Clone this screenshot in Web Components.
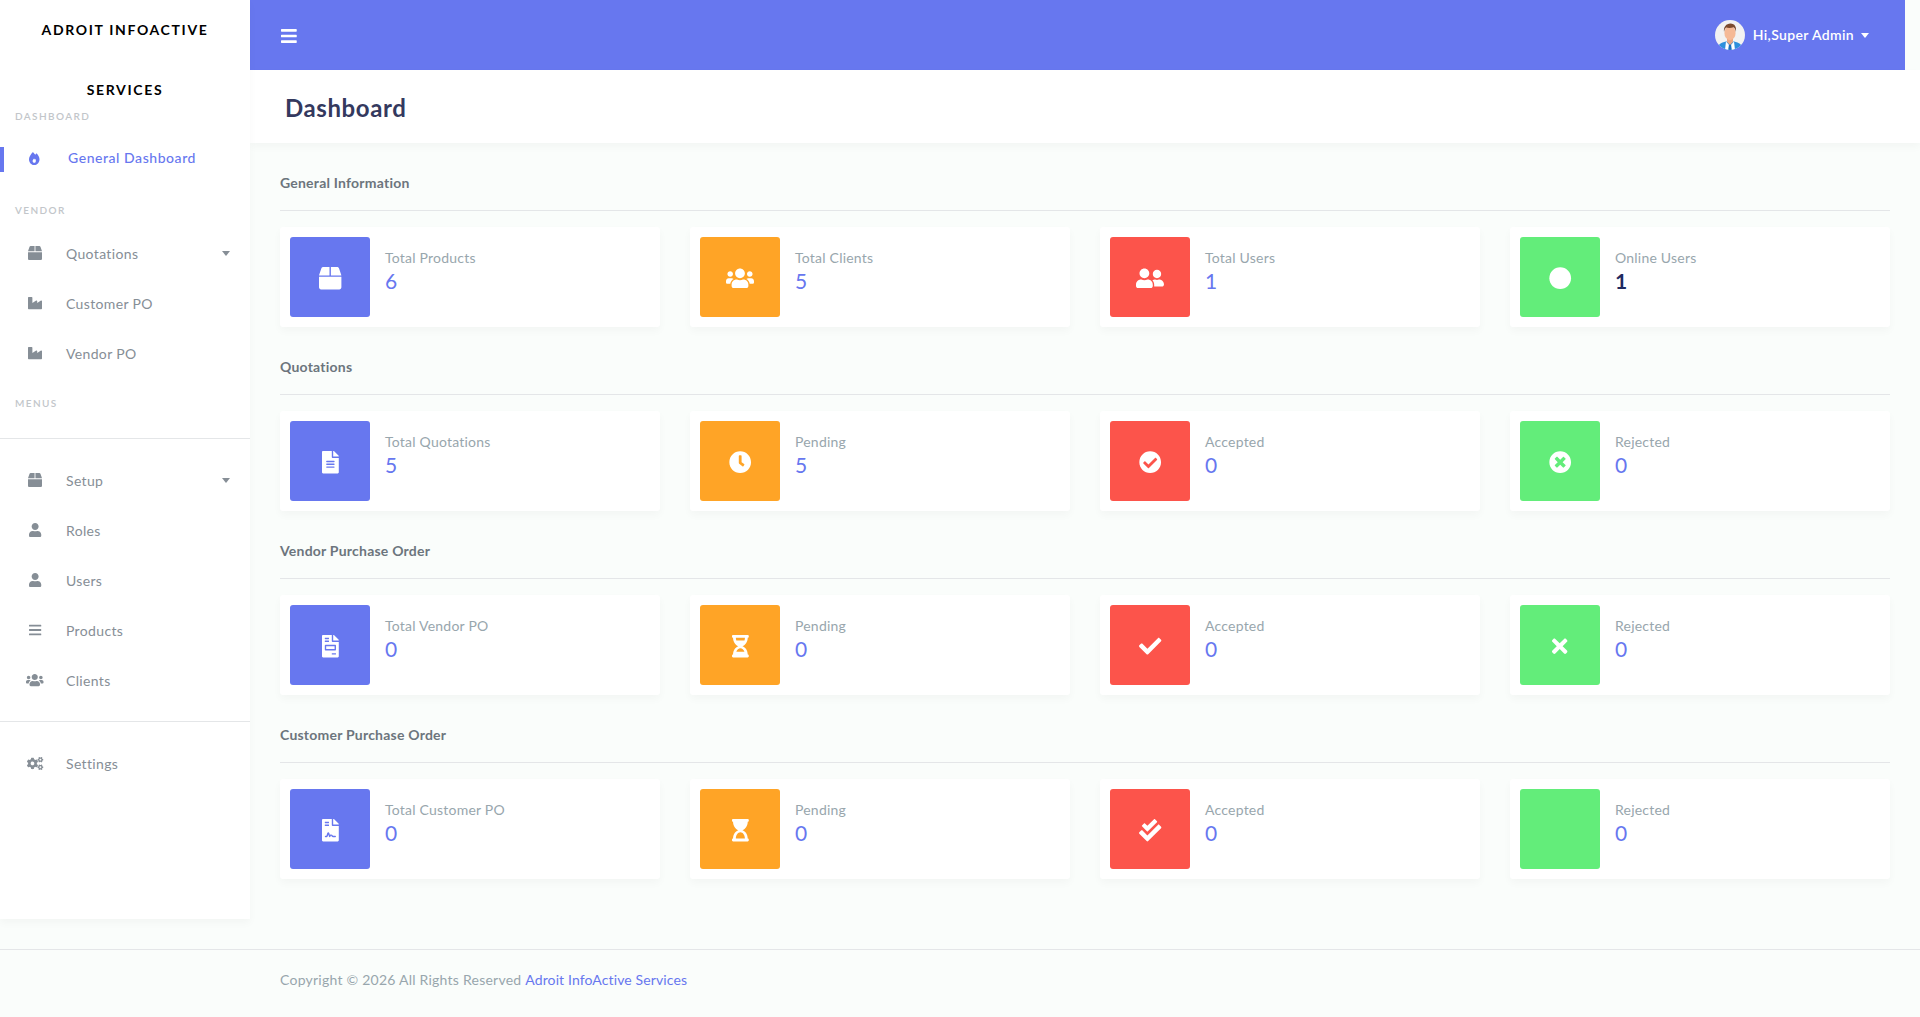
<!DOCTYPE html>
<html lang="en">
<head>
<meta charset="utf-8">
<title>Dashboard</title>
<style>
  html, body { margin: 0; padding: 0; background: #fafdfb; }
  body { font-family: "Lato", "Noto Sans", sans-serif; font-size: 14px; color: #6c757d; width: 1920px; height: 1017px; overflow: hidden; }
</style>
</head>
<body>
<app-shell>
  <app-sidebar slot="sidebar">
    <side-brand>ADROIT INFOACTIVE SERVICES</side-brand>
    <menu-header style="margin-top:0">DASHBOARD</menu-header>
    <menu-item icon="fire" active style="margin-top:4px">General Dashboard</menu-item>
    <menu-header style="margin-top:16px">VENDOR</menu-header>
    <menu-item icon="box" caret style="margin-top:6px">Quotations</menu-item>
    <menu-item icon="industry">Customer PO</menu-item>
    <menu-item icon="industry">Vendor PO</menu-item>
    <menu-header style="margin-top:13px">MENUS</menu-header>
    <side-rule style="margin-top:22px"></side-rule>
    <menu-item icon="box" caret style="margin-top:17px">Setup</menu-item>
    <menu-item icon="user">Roles</menu-item>
    <menu-item icon="user">Users</menu-item>
    <menu-item icon="bars">Products</menu-item>
    <menu-item icon="users">Clients</menu-item>
    <side-rule style="margin-top:15px"></side-rule>
    <menu-item icon="cogs" style="margin-top:17px">Settings</menu-item>
  </app-sidebar>

  <top-bar slot="main"></top-bar>
  <page-title slot="main">Dashboard</page-title>

  <stat-section slot="main" heading="General Information">
    <stat-card tone="blue" icon="box" label="Total Products" value="6"></stat-card>
    <stat-card tone="orange" icon="users" label="Total Clients" value="5"></stat-card>
    <stat-card tone="red" icon="user-friends" label="Total Users" value="1"></stat-card>
    <stat-card tone="green" icon="circle" label="Online Users" value="1" strong></stat-card>
  </stat-section>
  <stat-section slot="main" heading="Quotations">
    <stat-card tone="blue" icon="file-alt" label="Total Quotations" value="5"></stat-card>
    <stat-card tone="orange" icon="clock" label="Pending" value="5"></stat-card>
    <stat-card tone="red" icon="check-circle" label="Accepted" value="0"></stat-card>
    <stat-card tone="green" icon="times-circle" label="Rejected" value="0"></stat-card>
  </stat-section>
  <stat-section slot="main" heading="Vendor Purchase Order">
    <stat-card tone="blue" icon="file-invoice" label="Total Vendor PO" value="0"></stat-card>
    <stat-card tone="orange" icon="hourglass-half" label="Pending" value="0"></stat-card>
    <stat-card tone="red" icon="check" label="Accepted" value="0"></stat-card>
    <stat-card tone="green" icon="times" label="Rejected" value="0"></stat-card>
  </stat-section>
  <stat-section slot="main" heading="Customer Purchase Order">
    <stat-card tone="blue" icon="file-contract" label="Total Customer PO" value="0"></stat-card>
    <stat-card tone="orange" icon="hourglass-start" label="Pending" value="0"></stat-card>
    <stat-card tone="red" icon="check-double" label="Accepted" value="0"></stat-card>
    <stat-card tone="green" label="Rejected" value="0"></stat-card>
  </stat-section>

  <page-footer slot="footer">Copyright © 2026 All Rights Reserved <a href="#">Adroit InfoActive Services</a></page-footer>
</app-shell>

<script>
const ICONS = {
  bars: [448, "M16 132h416c8.837 0 16-7.163 16-16V76c0-8.837-7.163-16-16-16H16C7.163 60 0 67.163 0 76v40c0 8.837 7.163 16 16 16zm0 160h416c8.837 0 16-7.163 16-16v-40c0-8.837-7.163-16-16-16H16c-8.837 0-16 7.163-16 16v40c0 8.837 7.163 16 16 16zm0 160h416c8.837 0 16-7.163 16-16v-40c0-8.837-7.163-16-16-16H16c-8.837 0-16 7.163-16 16v40c0 8.837 7.163 16 16 16z"],
  check: [512, "M173.898 439.404l-166.4-166.4c-9.997-9.997-9.997-26.206 0-36.204l36.203-36.204c9.997-9.998 26.207-9.998 36.204 0L192 312.69 432.095 72.596c9.997-9.997 26.207-9.997 36.204 0l36.203 36.204c9.997 9.997 9.997 26.206 0 36.204l-294.4 294.401c-9.998 9.997-26.207 9.997-36.204-.001z"],
  times: [352, "M242.72 256l100.07-100.07c12.28-12.28 12.28-32.19 0-44.48l-22.24-22.24c-12.28-12.28-32.19-12.28-44.48 0L176 189.28 75.93 89.21c-12.28-12.28-32.19-12.28-44.48 0L9.21 111.45c-12.28 12.28-12.28 32.19 0 44.48L109.28 256 9.21 356.07c-12.28 12.28-12.28 32.19 0 44.48l22.24 22.24c12.28 12.28 32.2 12.28 44.48 0L176 322.72l100.07 100.07c12.28 12.28 32.2 12.28 44.48 0l22.24-22.24c12.28-12.28 12.28-32.19 0-44.48L242.72 256z"],
  "check-circle": [512, "M504 256c0 136.967-111.033 248-248 248S8 392.967 8 256 119.033 8 256 8s248 111.033 248 248zM227.314 387.314l184-184c6.248-6.248 6.248-16.379 0-22.627l-22.627-22.627c-6.248-6.249-16.379-6.249-22.628 0L216 308.118l-70.059-70.059c-6.248-6.248-16.379-6.248-22.628 0l-22.627 22.627c-6.248 6.248-6.248 16.379 0 22.627l104 104c6.249 6.249 16.379 6.249 22.628.001z"],
  "times-circle": [512, "M256 8C119 8 8 119 8 256s111 248 248 248 248-111 248-248S393 8 256 8zm121.6 313.1c4.7 4.7 4.7 12.3 0 17L338 377.6c-4.7 4.7-12.3 4.7-17 0L256 312l-65.1 65.6c-4.7 4.7-12.3 4.7-17 0L134.4 338c-4.7-4.7-4.7-12.3 0-17l65.6-65-65.6-65.1c-4.7-4.7-4.7-12.3 0-17l39.6-39.6c4.7-4.7 12.3-4.7 17 0l65 65.7 65.1-65.6c4.7-4.7 12.3-4.7 17 0l39.6 39.6c4.7 4.7 4.7 12.3 0 17L312 256l65.6 65.1z"],
  clock: [512, "M256,8C119,8,8,119,8,256S119,504,256,504,504,393,504,256,393,8,256,8Zm92.49,313h0l-20,25a16,16,0,0,1-22.49,2.5h0l-67-49.72a40,40,0,0,1-15-31.23V112a16,16,0,0,1,16-16h32a16,16,0,0,1,16,16V256l58,42.5A16,16,0,0,1,348.49,321Z"],
  circle: [512, "M256 8C119 8 8 119 8 256s111 248 248 248 248-111 248-248S393 8 256 8z"],
  user: [448, "M224 256c70.7 0 128-57.3 128-128S294.7 0 224 0 96 57.3 96 128s57.3 128 128 128zm89.6 32h-16.7c-22.2 10.2-46.9 16-72.9 16s-50.6-5.8-72.9-16h-16.7C60.2 288 0 348.2 0 422.4V464c0 26.5 21.5 48 48 48h352c26.5 0 48-21.5 48-48v-41.6c0-74.2-60.2-134.4-134.4-134.4z"],
  users: [640, "M96 224c35.3 0 64-28.7 64-64s-28.7-64-64-64-64 28.7-64 64 28.7 64 64 64zm448 0c35.3 0 64-28.7 64-64s-28.7-64-64-64-64 28.7-64 64 28.7 64 64 64zm32 32h-64c-17.6 0-33.5 7.1-45.1 18.6 40.3 22.1 68.9 62 75.1 109.4h66c17.7 0 32-14.3 32-32v-32c0-35.3-28.7-64-64-64zm-256 0c61.9 0 112-50.1 112-112S381.9 32 320 32 208 82.1 208 144s50.1 112 112 112zm76.8 32h-8.3c-20.8 10-43.9 16-68.5 16s-47.6-6-68.5-16h-8.3C179.6 288 128 339.6 128 403.2V432c0 26.5 21.5 48 48 48h288c26.5 0 48-21.5 48-48v-28.8c0-63.6-51.6-115.2-115.2-115.2zm-223.7-13.4C161.5 263.1 145.6 256 128 256H64c-35.3 0-64 28.7-64 64v32c0 17.7 14.3 32 32 32h65.9c6.3-47.4 34.9-87.3 75.2-109.4z"],
  "user-friends": [640, "M192 256c61.9 0 112-50.1 112-112S253.9 32 192 32 80 82.1 80 144s50.1 112 112 112zm76.8 32h-8.3c-20.8 10-43.9 16-68.5 16s-47.6-6-68.5-16h-8.3C51.6 288 0 339.6 0 403.2V432c0 26.5 21.5 48 48 48h288c26.5 0 48-21.5 48-48v-28.8c0-63.6-51.6-115.2-115.2-115.2zM480 256c53 0 96-43 96-96s-43-96-96-96-96 43-96 96 43 96 96 96zm48 32h-3.8c-13.9 4.8-28.6 8-44.2 8s-30.3-3.2-44.2-8H432c-20.4 0-39.2 5.9-55.7 15.4 24.4 26.3 39.7 61.2 39.7 99.8v38.4c0 2.2-.5 4.3-.6 6.4H592c26.5 0 48-21.5 48-48 0-61.9-50.1-112-112-112z"],
  box: [512, "M509.5 184.6L458.9 32.8C452.4 13.2 434.1 0 413.4 0H272v192h238.7c-.4-2.5-.4-5-1.2-7.4zM240 0H98.6c-20.7 0-39 13.2-45.5 32.8L2.5 184.6c-.8 2.4-.8 4.9-1.2 7.4H240V0zM0 224v240c0 26.5 21.5 48 48 48h416c26.5 0 48-21.5 48-48V224H0z"],
  fire: [448, "M323.56 51.2c-20.8 19.3-39.58 39.59-56.22 59.97C240.08 73.62 206.28 35.53 168 0 69.74 91.17 0 209.96 0 281.6 0 408.85 100.29 512 224 512s224-103.15 224-230.4c0-53.27-51.98-163.14-124.44-230.4zM226 424c-42 0-72-28-72-70 0-26 20-50 62-98 6 8 30 42 30 42l28-24c22 36 26 84 8 116-12 22-32 34-56 34z"],
  industry: [512, "M475.115 163.781L336 252.309v-68.28c0-18.916-20.931-30.399-36.885-20.248L160 252.309V56c0-13.255-10.745-24-24-24H24C10.745 32 0 42.745 0 56v400c0 13.255 10.745 24 24 24h464c13.255 0 24-10.745 24-24V184.029c0-18.917-20.931-30.399-36.885-20.248z"],
  cogs: [640, "M512.1 191l-8.2 14.3c-3 5.3-9.4 7.5-15.1 5.4-11.8-4.4-22.6-10.7-32.1-18.6-4.6-3.8-5.8-10.5-2.8-15.7l8.2-14.3c-6.9-8-12.3-17.3-15.9-27.4h-16.5c-6 0-11.2-4.3-12.2-10.3-2-12-2.1-24.6 0-37.1 1-6 6.2-10.4 12.2-10.4h16.5c3.6-10.1 9-19.4 15.9-27.4l-8.2-14.3c-3-5.2-1.9-11.9 2.8-15.7 9.5-7.9 20.4-14.2 32.1-18.6 5.7-2.1 12.1.1 15.1 5.4l8.2 14.3c10.5-1.9 21.2-1.9 31.7 0L552 6.3c3-5.3 9.4-7.5 15.1-5.4 11.8 4.4 22.6 10.7 32.1 18.6 4.6 3.8 5.8 10.5 2.8 15.7l-8.2 14.3c6.9 8 12.3 17.3 15.9 27.4h16.5c6 0 11.2 4.3 12.2 10.3 2 12 2.1 24.6 0 37.1-1 6-6.2 10.4-12.2 10.4h-16.5c-3.6 10.1-9 19.4-15.9 27.4l8.2 14.3c3 5.2 1.9 11.9-2.8 15.7-9.5 7.9-20.4 14.2-32.1 18.6-5.7 2.1-12.1-.1-15.1-5.4l-8.2-14.3c-10.4 1.9-21.2 1.9-31.7 0zm-10.5-58.8c38.5 29.6 82.4-14.3 52.8-52.8-38.5-29.7-82.4 14.3-52.8 52.8zM386.3 286.1l33.7 16.8c10.1 5.8 14.5 18.1 10.5 29.1-8.9 24.2-26.4 46.4-42.6 65.8-7.4 8.9-20.2 11.1-30.3 5.3l-29.1-16.8c-16 13.7-34.6 24.6-54.9 31.7v33.6c0 11.6-8.3 21.6-19.7 23.6-24.6 4.2-50.4 4.4-75.9 0-11.5-2-20-11.9-20-23.6V418c-20.3-7.2-38.9-18-54.9-31.7L74 403c-10 5.8-22.9 3.6-30.3-5.3-16.2-19.4-33.3-41.6-42.2-65.7-4-10.9.4-23.2 10.5-29.1l33.3-16.8c-3.9-20.9-3.9-42.4 0-63.4L12 205.8c-10.1-5.8-14.6-18.1-10.5-29 8.9-24.2 26-46.4 42.2-65.8 7.4-8.9 20.2-11.1 30.3-5.3l29.1 16.8c16-13.7 34.6-24.6 54.9-31.7V57.1c0-11.5 8.2-21.5 19.6-23.5 24.6-4.2 50.5-4.4 76-.1 11.5 2 20 11.9 20 23.6v33.6c20.3 7.2 38.9 18 54.9 31.7l29.1-16.8c10-5.8 22.9-3.6 30.3 5.3 16.2 19.4 33.2 41.6 42.1 65.8 4 10.9.1 23.2-10 29.1l-33.7 16.8c3.9 21 3.9 42.5 0 63.5zm-117.6 21.1c59.2-77-28.7-164.9-105.7-105.7-59.2 77 28.7 164.9 105.7 105.7zm243.4 182.7l-8.2 14.3c-3 5.3-9.4 7.5-15.1 5.4-11.8-4.4-22.6-10.7-32.1-18.6-4.6-3.8-5.8-10.5-2.8-15.7l8.2-14.3c-6.9-8-12.3-17.3-15.9-27.4h-16.5c-6 0-11.2-4.3-12.2-10.3-2-12-2.1-24.6 0-37.1 1-6 6.2-10.4 12.2-10.4h16.5c3.6-10.1 9-19.4 15.9-27.4l-8.2-14.3c-3-5.2-1.9-11.9 2.8-15.7 9.5-7.9 20.4-14.2 32.1-18.6 5.7-2.1 12.1.1 15.1 5.4l8.2 14.3c10.5-1.9 21.2-1.9 31.7 0l8.2-14.3c3-5.3 9.4-7.5 15.1-5.4 11.8 4.4 22.6 10.7 32.1 18.6 4.6 3.8 5.8 10.5 2.8 15.7l-8.2 14.3c6.9 8 12.3 17.3 15.9 27.4h16.5c6 0 11.2 4.3 12.2 10.3 2 12 2.1 24.6 0 37.1-1 6-6.2 10.4-12.2 10.4h-16.5c-3.6 10.1-9 19.4-15.9 27.4l8.2 14.3c3 5.2 1.9 11.9-2.8 15.7-9.5 7.9-20.4 14.2-32.1 18.6-5.7 2.1-12.1-.1-15.1-5.4l-8.2-14.3c-10.4 1.9-21.2 1.9-31.7 0zM501.6 431c38.5 29.6 82.4-14.3 52.8-52.8-38.5-29.6-82.4 14.3-52.8 52.8z"],
  "file-alt": [384, "M224 136V0H24C10.7 0 0 10.7 0 24v464c0 13.3 10.7 24 24 24h336c13.3 0 24-10.7 24-24V160H248c-13.2 0-24-10.8-24-24zm64 236c0 6.6-5.4 12-12 12H108c-6.6 0-12-5.4-12-12v-8c0-6.6 5.4-12 12-12h168c6.6 0 12 5.4 12 12v8zm0-64c0 6.6-5.4 12-12 12H108c-6.6 0-12-5.4-12-12v-8c0-6.6 5.4-12 12-12h168c6.6 0 12 5.4 12 12v8zm0-72v8c0 6.6-5.4 12-12 12H108c-6.6 0-12-5.4-12-12v-8c0-6.6 5.4-12 12-12h168c6.6 0 12 5.4 12 12zm96-114.1v6.1H256V0h6.1c6.4 0 12.5 2.5 17 7l97.9 98c4.5 4.5 7 10.6 7 16.9z"],
  "file-invoice": [384, "M288 256H96v64h192v-64zm89-151L279.1 7c-4.5-4.5-10.6-7-17-7H256v128h128v-6.1c0-6.3-2.5-12.4-7-16.9zm-153 31V0H24C10.7 0 0 10.7 0 24v464c0 13.3 10.7 24 24 24h336c13.3 0 24-10.7 24-24V160H248c-13.2 0-24-10.8-24-24zM64 72c0-4.42 3.58-8 8-8h80c4.42 0 8 3.58 8 8v16c0 4.42-3.58 8-8 8H72c-4.42 0-8-3.58-8-8V72zm0 64c0-4.42 3.58-8 8-8h80c4.42 0 8 3.58 8 8v16c0 4.42-3.58 8-8 8H72c-4.42 0-8-3.58-8-8v-16zm256 304c0 4.42-3.58 8-8 8h-80c-4.42 0-8-3.58-8-8v-16c0-4.42 3.58-8 8-8h80c4.42 0 8 3.58 8 8v16zm0-200v96c0 8.84-7.16 16-16 16H80c-8.84 0-16-7.16-16-16v-96c0-8.84 7.16-16 16-16h224c8.84 0 16 7.16 16 16z"],
  "file-contract": [384, "M224 136V0H24C10.7 0 0 10.7 0 24v464c0 13.3 10.7 24 24 24h336c13.3 0 24-10.7 24-24V160H248c-13.2 0-24-10.8-24-24zM64 72c0-4.42 3.58-8 8-8h80c4.42 0 8 3.58 8 8v16c0 4.42-3.58 8-8 8H72c-4.42 0-8-3.58-8-8V72zm0 64c0-4.42 3.58-8 8-8h80c4.42 0 8 3.58 8 8v16c0 4.42-3.58 8-8 8H72c-4.42 0-8-3.58-8-8v-16zm192.81 248H304c8.84 0 16 7.16 16 16s-7.16 16-16 16h-47.19c-16.45 0-31.27-9.14-38.64-23.86-2.95-5.92-8.09-6.52-10.17-6.52s-7.22.59-10.02 6.19l-7.67 15.34a15.986 15.986 0 0 1-14.31 8.84c-.38 0-.75-.02-1.14-.05-6.45-.45-12-4.75-14.03-10.89L144 354.59l-10.61 31.88c-5.89 17.66-22.38 29.53-41 29.53H80c-8.84 0-16-7.16-16-16s7.16-16 16-16h12.39c4.83 0 9.11-3.08 10.64-7.66l18.19-54.64c3.3-9.81 12.44-16.41 22.78-16.41s19.48 6.59 22.77 16.41l13.88 41.64c19.77-16.19 54.05-9.7 66 14.16 2.02 4.06 5.96 6.5 10.16 6.5zM377 105L279.1 7c-4.5-4.5-10.6-7-17-7H256v128h128v-6.1c0-6.3-2.5-12.4-7-16.9z"],
  "hourglass-half": [384, "M360 0H24C10.745 0 0 10.745 0 24v16c0 13.255 10.745 24 24 24 0 90.965 51.016 167.734 120.842 192C75.016 280.266 24 357.035 24 448c-13.255 0-24 10.745-24 24v16c0 13.255 10.745 24 24 24h336c13.255 0 24-10.745 24-24v-16c0-13.255-10.745-24-24-24 0-90.965-51.016-167.734-120.842-192C308.984 231.734 360 154.965 360 64c13.255 0 24-10.745 24-24V24c0-13.255-10.745-24-24-24zm-75.078 384H99.08c17.059-46.797 52.096-80 92.92-80 40.821 0 75.862 33.196 92.922 80zm.019-256H99.078C91.988 108.548 88 86.748 88 64h208c0 22.805-3.987 44.587-11.059 64z"],
  "hourglass-start": [384, "M360 0H24C10.745 0 0 10.745 0 24v16c0 13.255 10.745 24 24 24 0 90.965 51.016 167.734 120.842 192C75.016 280.266 24 357.035 24 448c-13.255 0-24 10.745-24 24v16c0 13.255 10.745 24 24 24h336c13.255 0 24-10.745 24-24v-16c0-13.255-10.745-24-24-24 0-90.965-51.016-167.734-120.842-192C308.984 231.734 360 154.965 360 64c13.255 0 24-10.745 24-24V24c0-13.255-10.745-24-24-24zm-64 448H88c0-77.458 46.204-144 104-144 57.786 0 104 66.517 104 144z"],
  "check-double": [512, "M505 174.8l-39.6-39.6c-9.4-9.4-24.6-9.4-33.9 0L192 374.7 80.6 263.2c-9.4-9.4-24.6-9.4-33.9 0L7 302.9c-9.4 9.4-9.4 24.6 0 34L175 505c9.4 9.4 24.6 9.4 33.9 0l296-296.2c9.4-9.5 9.4-24.7.1-34zm-324.3 106c6.2 6.3 16.4 6.3 22.6 0l208-208.2c6.2-6.3 6.2-16.4 0-22.6L366.1 4.7c-6.2-6.3-16.4-6.3-22.6 0L192 156.2l-55.4-55.5c-6.2-6.3-16.4-6.3-22.6 0L68.7 146c-6.2 6.3-6.2 16.4 0 22.6l112 112.2z"]
};

const FONT = '"Lato", "Noto Sans", sans-serif';

function define(name, css, html) {
  customElements.define(name, class extends HTMLElement {
    constructor() {
      super();
      this.attachShadow({ mode: "open" });
    }
    connectedCallback() {
      const markup = typeof html === "function" ? html(this) : html;
      this.shadowRoot.innerHTML = `<style>${css}</style>${markup}`;
    }
  });
}

define("fa-icon", `
  :host { display: inline-flex; line-height: 0; }
  svg { display: block; height: var(--icon-size, 14px); width: var(--icon-width, auto); fill: currentColor; fill-rule: var(--icon-rule, nonzero); overflow: visible; }
`, el => {
  const ic = ICONS[el.getAttribute("name")];
  const par = el.getAttribute("name") === "fire" ? ' preserveAspectRatio="none"' : "";
  return ic ? `<svg viewBox="0 0 ${ic[0]} 512"${par} aria-hidden="true"><path d="${ic[1]}"/></svg>` : "";
});

define("app-shell", `
  :host { display: block; width: 1920px; }
  .top { display: flex; align-items: flex-start; height: 949px; }
  .side { flex: 0 0 250px; }
  .main { flex: 1 1 auto; min-width: 0; }
`, `<div class="top"><div class="side"><slot name="sidebar"></slot></div><div class="main"><slot name="main"></slot></div></div><slot name="footer"></slot>`);

define("app-sidebar", `
  :host { display: flex; flex-direction: column; width: 250px; height: 919px; background: #fff; box-shadow: 0 4px 8px rgba(0,0,0,.03); position: relative; z-index: 2; }
`, `<slot></slot>`);

define("side-brand", `
  :host { display: block; height: 105px; padding: 0 30px; box-sizing: border-box; text-align: center; font: 700 14px/59.500px ${FONT}; letter-spacing: 1.65px; color: #000; }
`, `<slot></slot>`);

define("menu-header", `
  :host { display: block; height: 24px; padding: 0 15px; box-sizing: border-box; font: 600 10px/23px ${FONT}; letter-spacing: 1.4px; color: #c2c6ca; }
`, `<slot></slot>`);

define("side-rule", `
  :host { display: block; height: 1px; background: #e4e6e8; }
`, ``);

define("menu-item", `
  :host { display: flex; align-items: center; height: 50px; position: relative; color: #868e96; font: 400 14px/20px ${FONT}; letter-spacing: .35px; }
  .ic { flex: 0 0 auto; width: 14px; margin-left: 28px; margin-right: 24px; display: flex; justify-content: center; --icon-size: 14px; position: relative; top: -1px; }
  .ic.cogs { --icon-size: 13px; }
  .ic.fire { --icon-size: 13px; --icon-width: 10.500px; --icon-rule: evenodd; top: .5px; margin-left: 27px; }
  .caret { position: absolute; left: 222px; top: 22px; width: 0; height: 0; border: 4px solid transparent; border-top: 5px solid #868e96; border-bottom: 0; }
  :host([active]) { color: #6777ef; font-weight: 500; letter-spacing: .55px; }
  :host([active]) .ic { margin-right: 27px; }
  :host([active])::before { content: ""; position: absolute; left: 0; top: 14px; height: 25px; width: 4px; background: #6777ef; }
`, el => `<span class="ic ${el.getAttribute("icon")}"><fa-icon name="${el.getAttribute("icon")}"></fa-icon></span><slot></slot>${el.hasAttribute("caret") ? '<span class="caret"></span>' : ""}`);

define("top-bar", `
  :host { display: flex; align-items: center; justify-content: space-between; height: 70px; margin-right: 15px; padding: 0 36px 0 31px; box-sizing: border-box; background: #6777ef; color: #fff; }
  .burger { --icon-size: 18px; display: flex; position: relative; top: .5px; }
  .user { display: flex; align-items: center; font: 600 14px/20px ${FONT}; letter-spacing: .36px; }
  .avatar { width: 30px; height: 30px; margin-right: 8px; display: block; }
  .caret { width: 0; height: 0; margin-left: 7px; border: 4px solid transparent; border-top: 5px solid #fff; border-bottom: 0; }
`, `<span class="burger"><fa-icon name="bars"></fa-icon></span>
<span class="user">
  <svg class="avatar" viewBox="0 0 30 30" aria-hidden="true">
    <defs><clipPath id="av"><circle cx="15" cy="15" r="15"/></clipPath></defs>
    <g clip-path="url(#av)">
      <rect width="30" height="30" fill="#f2f2f2"/>
      <path d="M2 30c0-5 4-7.500 9-8.500h8c5 1 9 3.500 9 8.500z" fill="#2d8fdc"/>
      <path d="M11 21.500l4 4.500 4-4.500 1 8.500H10z" fill="#fff"/>
      <path d="M14 24h2l.8 6h-3.600z" fill="#1a6fc0"/>
      <path d="M12 18h6v4l-3 3-3-3z" fill="#eaa783"/>
      <ellipse cx="15" cy="13" rx="5.600" ry="7.200" fill="#f5b996"/>
      <path d="M9 12c-.6-5 2.200-8.500 6.500-8.500S21.600 7 21 12c-.5-2.500-1.200-4-2.500-4.700-2.500 1-5.500 1-7.300.3C10 8.500 9.500 10 9 12z" fill="#7b4a2e"/>
    </g>
  </svg>
  Hi,Super Admin<span class="caret"></span>
</span>`);

define("page-title", `
  :host { display: flex; align-items: center; height: 73px; padding: 2px 0 0 35px; margin-bottom: 29px; box-sizing: border-box; background: #fff; box-shadow: 0 4px 8px rgba(0,0,0,.03); font: 700 24px/30px ${FONT}; letter-spacing: .6px; color: #34395e; position: relative; }
`, `<slot></slot>`);

define("stat-section", `
  :host { display: block; margin: 0 30px 29px 30px; }
  h2 { margin: 0; height: 22px; font: 700 14px/22px ${FONT}; color: #6c757d; letter-spacing: .22px; }
  hr { margin: 16px 0; border: 0; height: 1px; background: #e4e6e8; }
  .grid { display: grid; grid-template-columns: repeat(4, 380px); column-gap: 30px; }
`, el => `<h2>${el.getAttribute("heading")}</h2><hr><div class="grid"><slot></slot></div>`);

define("stat-card", `
  :host { display: flex; height: 100px; padding: 10px; box-sizing: border-box; background: #fff; border-radius: 3px; box-shadow: 0 4px 8px rgba(0,0,0,.03); }
  .tile { flex: 0 0 80px; height: 80px; border-radius: 3px; display: flex; align-items: center; justify-content: center; color: #fff; --icon-size: 22.4px; }
  .tile fa-icon { position: relative; top: 1px; }
  .blue { background: #6777ef; } .orange { background: #ffa426; } .red { background: #fc544b; } .green { background: #63ed7a; }
  .text { margin-left: 15px; padding-top: 11px; }
  .label { font: 400 14px/20px ${FONT}; letter-spacing: .22px; color: #98a6ad; }
  .value { font: 400 21px/24px ${FONT}; letter-spacing: .3px; color: #6777ef; margin-top: 1px; }
  :host([strong]) .value { color: #1f2a60; font-weight: 700; }
`, el => {
  const icon = el.getAttribute("icon");
  return `<div class="tile ${el.getAttribute("tone")}">${icon ? `<fa-icon name="${icon}"></fa-icon>` : ""}</div>
  <div class="text"><div class="label">${el.getAttribute("label")}</div><div class="value">${el.getAttribute("value")}</div></div>`;
});

define("page-footer", `
  :host { display: block; height: 68px; padding: 20px 0 0 280px; box-sizing: border-box; border-top: 1px solid #e4e6e8; font: 400 14px/20px ${FONT}; letter-spacing: .24px; color: #98a6ad; }
  ::slotted(a) { color: #6777ef; text-decoration: none; letter-spacing: .12px; }
`, `<slot></slot>`);
</script>
</body>
</html>
